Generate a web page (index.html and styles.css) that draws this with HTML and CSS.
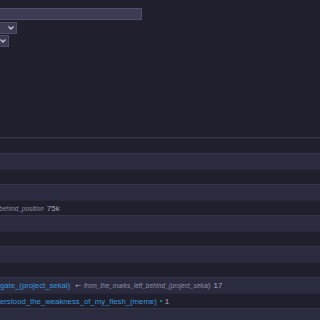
FILE: index.html
```html
<!DOCTYPE html>
<html>
<head>
<meta charset="utf-8">
<link rel="stylesheet" href="styles.css">
</head>
<body>
<div class="filters">
  <div class="search"></div>
  <div class="select sel-a"><svg class="chev" width="6" height="4" viewBox="0 0 6 4"><path d="M0.5 0.5 L3 3 L5.5 0.5" fill="none" stroke="#c4c4d4" stroke-width="1.3"/></svg></div>
  <div class="select sel-b"><svg class="chev" width="6" height="4" viewBox="0 0 6 4"><path d="M0.5 0.5 L3 3 L5.5 0.5" fill="none" stroke="#c4c4d4" stroke-width="1.3"/></svg></div>
</div>
<div class="table">
  <div class="head"></div>
  <div class="row"></div>
  <div class="row"></div>
  <div class="row"></div>
  <div class="row"></div>
  <div class="row"><span class="tag">left_behind_position</span><span class="count">75k</span></div>
  <div class="row"></div>
  <div class="row"></div>
  <div class="row"></div>
  <div class="row"></div>
  <div class="row"><span class="link">on_gate_(project_sekai)</span><span class="arrow">←</span><span class="tag">from_the_marks_left_behind_(project_sekai)</span><span class="count">17</span></div>
  <div class="row"><span class="link">understood_the_weakness_of_my_flesh_(meme)</span><span class="dot"></span><span class="count">1</span></div>
  <div class="row"></div>
</div>
</body>
</html>
```
FILE: styles.css
```css
html, body {
  margin: 0;
  padding: 0;
  background: #1f1f2d;
  overflow: hidden;
  width: 320px;
  height: 320px;
  font-family: "Liberation Sans", Arial, sans-serif;
}
.filters {
  padding-top: 8px;
  margin-left: -100px;
}
.search {
  width: 242px;
  height: 12px;
  box-sizing: border-box;
  background: #3b3b53;
  border: 1px solid #4e4e68;
}
.select {
  height: 12px;
  box-sizing: border-box;
  background: #3b3b53;
  border: 1px solid #4e4e68;
  display: flex;
  align-items: center;
  justify-content: flex-end;
  padding-right: 2px;
}
.sel-a {
  width: 117px;
  margin-top: 2px;
}
.sel-b {
  width: 109px;
  margin-top: 1px;
}
.table {
  margin-top: 75px;
  margin-left: -13px;
  width: 360px;
}
.head {
  height: 15px;
  border-bottom: 1px solid #37374d;
}
.row {
  box-sizing: border-box;
  height: 15px;
  border-top: 1px solid #28283a;
  display: flex;
  align-items: center;
  white-space: nowrap;
  font-size: 7.75px;
}
.row:nth-child(odd) {
  height: 16px;
  background: #2b2b3f;
  border-top-color: #353549;
}
.tag {
  font-style: italic;
  font-size: 6.4px;
  color: #8e8ea6;
}
.count {
  color: #a6a6ba;
  margin-left: 3px;
  font-size: 8px;
}
.link {
  color: #3a96dc;
}
.arrow {
  color: #a0a0b6;
  font-family: "DejaVu Sans", sans-serif;
  font-size: 7px;
  margin: 0 3px 0 5px;
}
.dot {
  width: 2px;
  height: 2px;
  border-radius: 50%;
  background: #1ba3a3;
  margin-left: 3px;
}
.dot + .count {
  margin-left: 3px;
}
```
